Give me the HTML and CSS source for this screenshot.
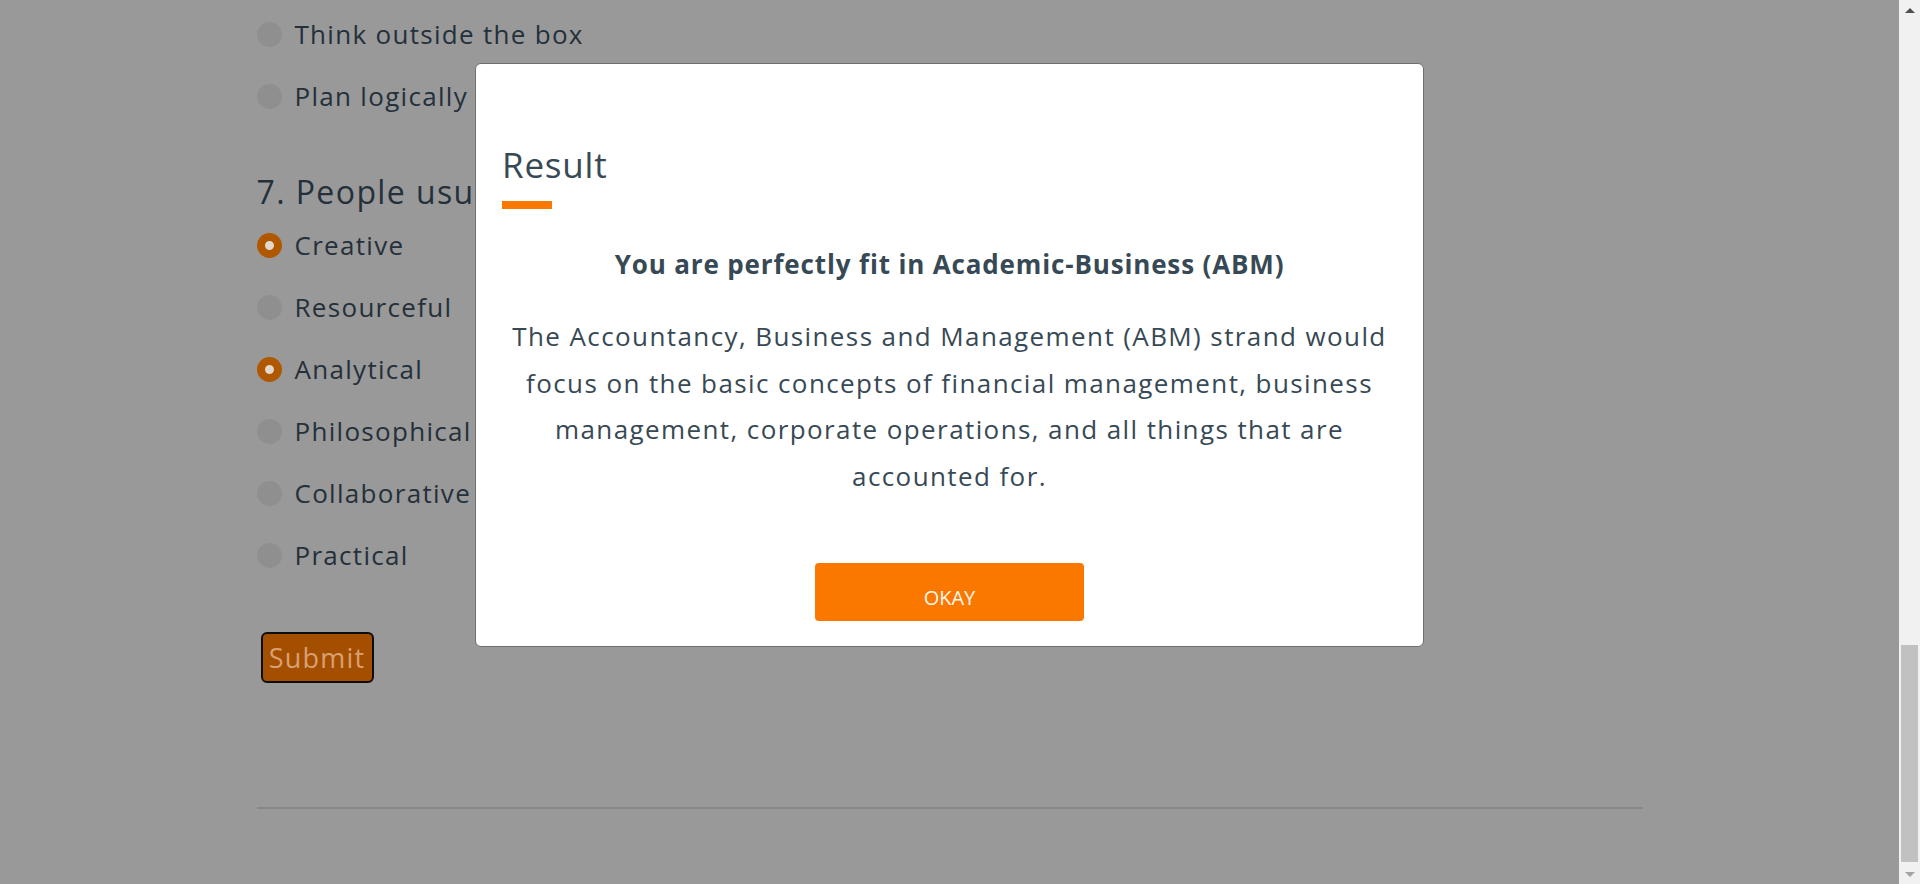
FILE: index.html
```html
<!DOCTYPE html>
<html lang="en">
<head>
<meta charset="utf-8">
<title>Strand Quiz - Result</title>
<link rel="stylesheet" href="styles.css">
</head>
<body>
<div class="viewport">
  <main class="page">
    <div class="container">
      <div class="options">
        <label class="option"><span class="radio"></span><span class="opt-text">Think outside the box</span></label>
        <label class="option"><span class="radio"></span><span class="opt-text">Plan logically</span></label>
      </div>
      <h2 class="question">7. People usually describe me as</h2>
      <div class="options">
        <label class="option"><span class="radio checked"></span><span class="opt-text">Creative</span></label>
        <label class="option"><span class="radio"></span><span class="opt-text">Resourceful</span></label>
        <label class="option"><span class="radio checked"></span><span class="opt-text">Analytical</span></label>
        <label class="option"><span class="radio"></span><span class="opt-text">Philosophical</span></label>
        <label class="option"><span class="radio"></span><span class="opt-text">Collaborative</span></label>
        <label class="option"><span class="radio"></span><span class="opt-text">Practical</span></label>
      </div>
      <button class="submit" type="button">Submit</button>
      <hr class="rule">
    </div>

    <div class="modal">
      <div class="modal-header">
        <h3 class="modal-title">Result</h3>
        <div class="title-bar"></div>
      </div>
      <div class="modal-body">
        <h4 class="result-head">You are perfectly fit in Academic-Business (ABM)</h4>
        <p class="result-text">The Accountancy, Business and Management (ABM) strand would focus on the basic concepts of financial management, business management, corporate operations, and all things that are accounted for.</p>
      </div>
      <div class="modal-footer">
        <button class="okay" type="button">OKAY</button>
      </div>
    </div>
  </main>
  <div class="scrollbar">
    <span class="arrow up"></span>
    <div class="track"><div class="thumb"></div></div>
    <span class="arrow down"></span>
  </div>
</div>
</body>
</html>
```

FILE: styles.css
```css
* { box-sizing: border-box; }
html, body {
  margin: 0;
  padding: 0;
  height: 100%;
  overflow: hidden;
}
body {
  font-family: "Open Sans", "Noto Sans", sans-serif;
  color: #24303a;
}
.viewport {
  display: flex;
  height: 884px;
}
.page {
  flex: 1;
  position: relative;
  background: #999999;
  overflow: hidden;
}
.container {
  width: 1386px;
  margin: 0 auto;
  padding-top: 3px;
}
.options {
  display: flex;
  flex-direction: column;
}
.option {
  display: flex;
  align-items: center;
  height: 62px;
  gap: 13px;
}
.radio {
  width: 25px;
  height: 25px;
  border-radius: 50%;
  background: #8f8f8f;
  flex: none;
}
.radio.checked {
  background: #e2d8ce;
  border: 8px solid #b05800;
}
.opt-text {
  font-size: 26px;
  letter-spacing: 1.3px;
  color: #24303a;
}
.question {
  margin: 45px 0 2px;
  font-size: 32px;
  font-weight: 400;
  line-height: 40px;
  letter-spacing: 1.4px;
  color: #24303a;
}
.submit {
  display: block;
  margin: 46px 0 0 4px;
  width: 113px;
  height: 51px;
  border: 2px solid #0d0d0d;
  border-radius: 6px;
  background: #a44f00;
  color: #d9a073;
  font-family: inherit;
  font-size: 27px;
  letter-spacing: 1.2px;
  padding: 0;
}
.rule {
  margin: 124px 0 0;
  border: 0;
  border-top: 2px solid #888888;
}
.modal {
  position: absolute;
  left: 475px;
  top: 63px;
  width: 949px;
  height: 584px;
  background: #ffffff;
  border: 1px solid #6f6f6f;
  border-radius: 6px;
  padding: 0 26px;
  display: flex;
  flex-direction: column;
  color: #374955;
}
.modal-header {
  padding-top: 80px;
}
.modal-title {
  margin: 0;
  font-size: 35px;
  font-weight: 400;
  line-height: 42px;
  letter-spacing: 0.8px;
  color: #374955;
}
.title-bar {
  width: 50px;
  height: 8px;
  background: #fa7800;
  margin-top: 15px;
}
.modal-body {
  text-align: center;
}
.result-head {
  margin: 37px 0 0;
  font-size: 26px;
  font-weight: 700;
  line-height: 36px;
  letter-spacing: 0.85px;
  color: #374955;
}
.result-text {
  margin: 31px 0 0;
  font-size: 26px;
  line-height: 46.5px;
  letter-spacing: 1.4px;
  color: #374955;
}
.modal-footer {
  display: flex;
  justify-content: center;
  margin-top: 64px;
}
.okay {
  width: 269px;
  height: 58px;
  border: 0;
  border-radius: 4px;
  background: #fa7800;
  color: #fff6ee;
  font-family: "Open Sans", sans-serif;
  font-size: 20px;
  font-weight: 500;
  padding: 11px 0 0;
}
.scrollbar {
  width: 21px;
  flex: none;
  background: #f1f1f1;
  display: flex;
  flex-direction: column;
  align-items: center;
}
.track {
  flex: 1;
  width: 100%;
  padding: 0 2px;
  display: flex;
  flex-direction: column;
  justify-content: flex-end;
}
.thumb {
  height: 217px;
  background: #c1c1c1;
  margin-bottom: 4px;
}
.arrow {
  width: 0;
  height: 0;
  border-left: 5px solid transparent;
  border-right: 5px solid transparent;
  margin: 8px 0;
}
.arrow.up {
  border-bottom: 5px solid #505050;
}
.arrow.down {
  border-top: 5px solid #a3a3a3;
  margin: 6px 0 7px;
}
```
